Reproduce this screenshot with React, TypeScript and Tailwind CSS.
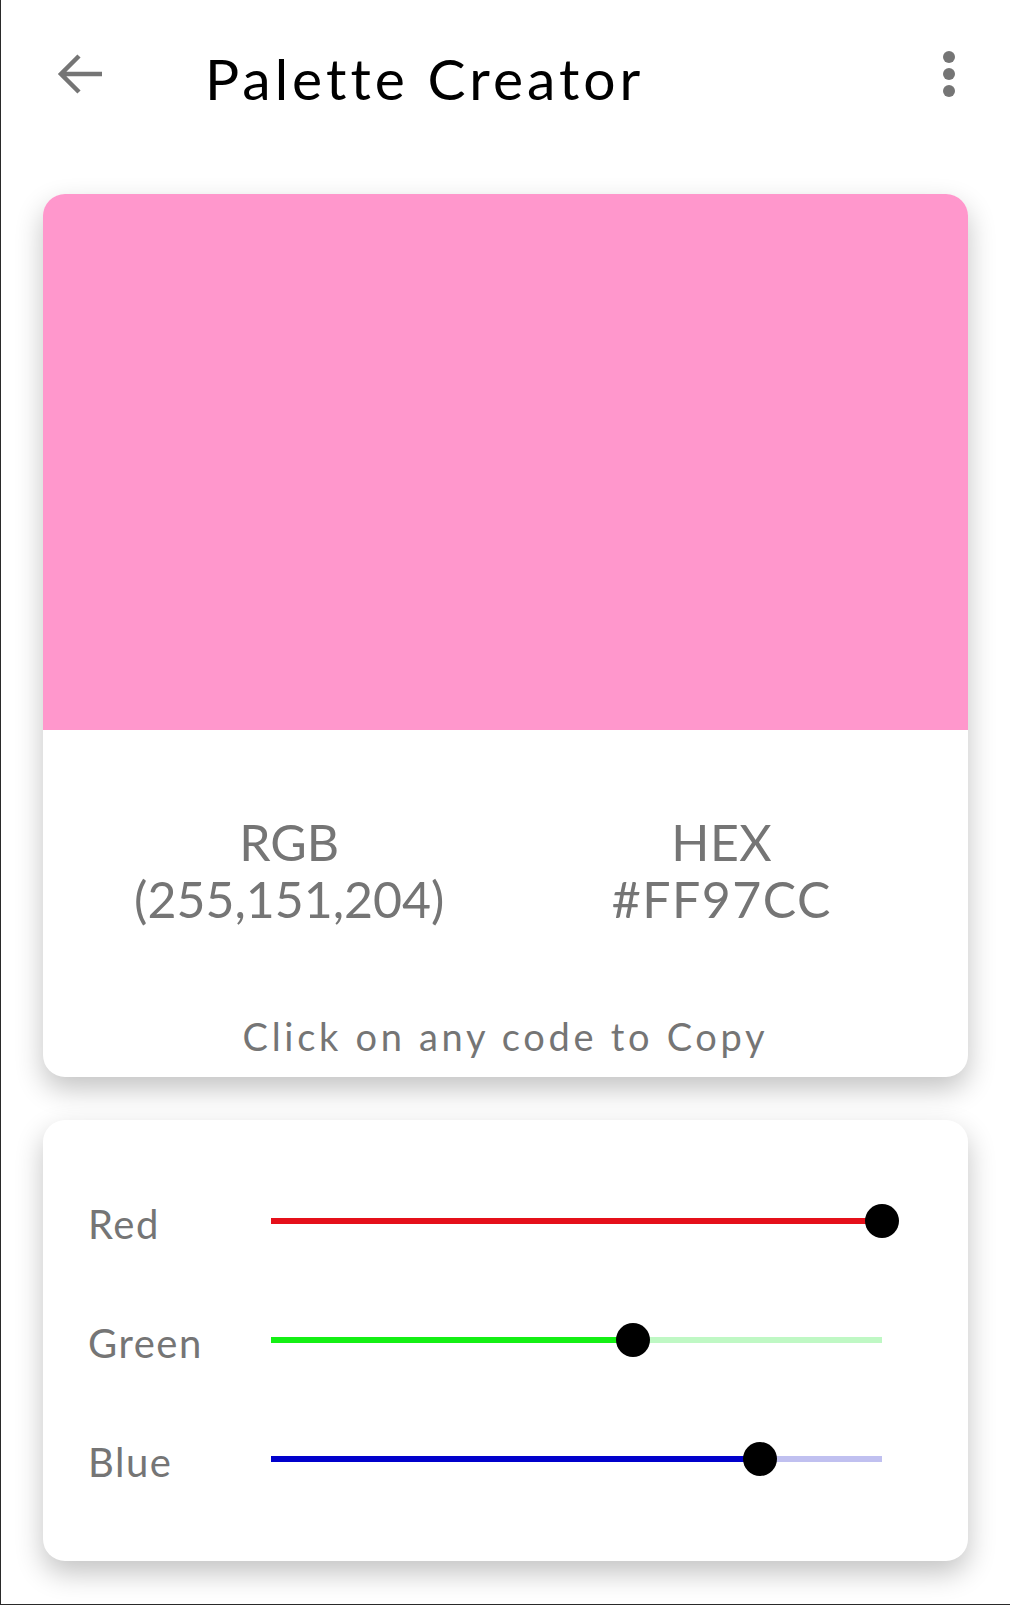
import React, { useState } from "react";

const FONT = "font-['Lato','Noto_Sans',sans-serif]";

interface Channel {
  label: string;
  value: number;
  active: string;
  inactive: string;
}

function ColorSlider({ ch }: { ch: Channel }) {
  const pct = (ch.value / 255) * 100;
  return (
    <div className="flex items-center h-[34px]">
      <span className="w-[183px] text-[40px] leading-none text-[#757575] tracking-[1.5px] pt-[6px]">{ch.label}</span>
      <div className="relative w-[611px] h-[34px]">
        <div className="absolute left-0 right-0 top-[14px] h-[6px]" style={{ background: ch.inactive }} />
        <div className="absolute left-0 top-[14px] h-[6px]" style={{ width: `${pct}%`, background: ch.active }} />
        <div
          className="absolute top-0 w-[34px] h-[34px] -ml-[17px] rounded-full bg-black"
          style={{ left: `${pct}%` }}
        />
      </div>
    </div>
  );
}

export default function App() {
  const [rgb] = useState({ r: 255, g: 151, b: 204 });

  const channels: Channel[] = [
    { label: "Red", value: rgb.r, active: "#e5101a", inactive: "#f8c0c0" },
    { label: "Green", value: rgb.g, active: "#14f014", inactive: "#bff8c4" },
    { label: "Blue", value: rgb.b, active: "#0000cc", inactive: "#c0c0f0" },
  ];

  return (
    <div className={`${FONT} w-[1010px] h-[1605px] bg-white border-l border-b border-[#2a2a2a] overflow-hidden`}>
      {/* Header */}
      <div className="flex items-center h-[150px] pb-[2px]">
        <div className="w-[204px] flex pl-[56px]">
          <svg width="46" height="44" viewBox="0 0 46 44" fill="none">
            <path d="M45 22H4M22 4L4 22L22 40" stroke="#757575" strokeWidth="4.5" />
          </svg>
        </div>
        <h1 className="flex-1 text-[57px] leading-none text-black tracking-[4px] pt-[8px]">Palette Creator</h1>
        <div className="flex flex-col items-center gap-[5px] pr-[55px]">
          <span className="w-[12px] h-[12px] rounded-full bg-[#757575]" />
          <span className="w-[12px] h-[12px] rounded-full bg-[#757575]" />
          <span className="w-[12px] h-[12px] rounded-full bg-[#757575]" />
        </div>
      </div>

      {/* Preview card */}
      <div className="mt-[44px] ml-[42px] w-[925px] rounded-[22px] bg-white overflow-hidden shadow-[0_12px_28px_rgba(0,0,0,0.24)]">
        <div className="h-[536px] bg-[#ff97cc]" />
        <div className="grid grid-cols-2 px-[30px] pt-[84px] text-[#757575] text-center text-[50px] leading-[57px]">
          <div>
            <div>RGB</div>
            <div>(255,151,204)</div>
          </div>
          <div>
            <div className="tracking-[0.5px]">HEX</div>
            <div className="tracking-[1.5px]">#FF97CC</div>
          </div>
        </div>
        <p className="text-center text-[38px] leading-none text-[#757575] tracking-[3.7px] mt-[89px] pb-[22px]">
          Click on any code to Copy
        </p>
      </div>

      {/* Sliders card */}
      <div className="mt-[43px] ml-[42px] w-[925px] h-[441px] rounded-[22px] bg-white shadow-[0_12px_28px_rgba(0,0,0,0.24)] pl-[45px] pt-[84px] flex flex-col gap-[85px]">
        {channels.map((ch) => (
          <ColorSlider key={ch.label} ch={ch} />
        ))}
      </div>
    </div>
  );
}
